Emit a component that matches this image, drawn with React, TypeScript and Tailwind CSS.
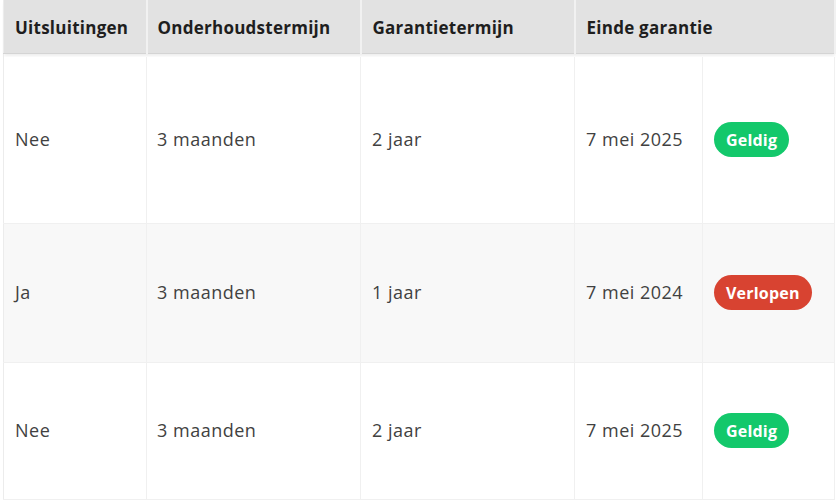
import React from 'react';

type Row = {
  excl: string;
  maint: string;
  warranty: string;
  end: string;
  valid: boolean;
  h: string;
  bg: string;
};

const rows: Row[] = [
  { excl: 'Nee', maint: '3 maanden', warranty: '2 jaar', end: '7 mei 2025', valid: true, h: 'h-[166px]', bg: 'bg-white' },
  { excl: 'Ja', maint: '3 maanden', warranty: '1 jaar', end: '7 mei 2024', valid: false, h: 'h-[139px]', bg: 'bg-[#f8f8f8]' },
  { excl: 'Nee', maint: '3 maanden', warranty: '2 jaar', end: '7 mei 2025', valid: true, h: 'h-[137px]', bg: 'bg-white' },
];

const StatusBadge: React.FC<{ valid: boolean }> = ({ valid }) =>
  valid ? (
    <span className="inline-flex h-[35px] items-center rounded-full bg-[#13c86b] px-[12px] text-[16px] font-bold tracking-[0.2px] text-white">
      Geldig
    </span>
  ) : (
    <span className="inline-flex h-[35px] items-center rounded-full bg-[#d84331] px-[12px] text-[16px] font-bold tracking-[0.2px] text-white">
      Verlopen
    </span>
  );

export default function App() {
  return (
    <div className="h-[500px] w-[836px] overflow-hidden bg-white pl-[3px] font-['Open_Sans','Noto_Sans',sans-serif]">
      <table className="w-[831px] table-fixed border-collapse border-l border-[#ececec]">
        <colgroup>
          <col className="w-[143px]" />
          <col className="w-[214px]" />
          <col className="w-[214px]" />
          <col className="w-[128px]" />
          <col className="w-[132px]" />
        </colgroup>
        <thead>
          <tr className="h-[53px] bg-[#e2e2e2] shadow-[0_3px_3px_rgba(0,0,0,0.07)]">
            <th className="border-r-2 border-b border-[#f1f1f1] border-b-[#d4d4d4] pl-[11px] pr-2 pt-[2px] text-left text-[17px] font-bold tracking-[0.25px] text-[#1e1e1e]">Uitsluitingen</th>
            <th className="border-r-2 border-b border-[#f1f1f1] border-b-[#d4d4d4] pl-[10px] pr-2 pt-[2px] text-left text-[17px] font-bold tracking-[0.25px] text-[#1e1e1e]">Onderhoudstermijn</th>
            <th className="border-r-2 border-b border-[#f1f1f1] border-b-[#d4d4d4] pl-[11px] pr-2 pt-[2px] text-left text-[17px] font-bold tracking-[0.25px] text-[#1e1e1e]">Garantietermijn</th>
            <th colSpan={2} className="border-r-2 border-b border-[#f1f1f1] border-b-[#d4d4d4] pl-[11px] pr-2 pt-[2px] text-left text-[17px] font-bold tracking-[0.25px] text-[#1e1e1e]">Einde garantie</th>
          </tr>
        </thead>
        <tbody>
          <tr className="h-[4px]"><td colSpan={5} className="p-0" /></tr>
          {rows.map((r, i) => (
            <tr key={i} className={`${r.h} ${r.bg} border-b border-[#f0f0f0]`}>
              <td className="border-r border-[#f0f0f0] pl-[11px] pr-2 text-[18px] tracking-[0.5px] text-[#414141]">{r.excl}</td>
              <td className="border-r border-[#f0f0f0] pl-[10px] pr-2 text-[18px] tracking-[0.5px] text-[#414141]">{r.maint}</td>
              <td className="border-r border-[#f0f0f0] pl-[11px] pr-2 text-[18px] tracking-[0.5px] text-[#414141]">{r.warranty}</td>
              <td className="border-r border-[#f0f0f0] pl-[11px] pr-2 text-[18px] tracking-[0.5px] text-[#414141]">{r.end}</td>
              <td className="border-r border-[#f0f0f0] pl-[11px] pr-2">
                <StatusBadge valid={r.valid} />
              </td>
            </tr>
          ))}
        </tbody>
      </table>
    </div>
  );
}
